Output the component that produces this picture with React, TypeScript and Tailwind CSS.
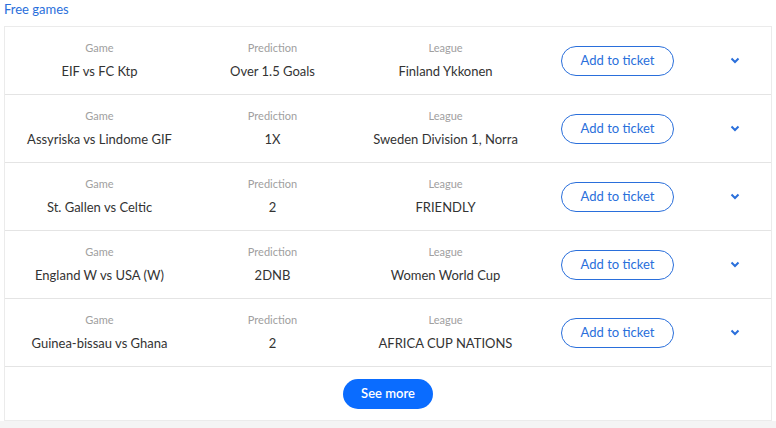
const games = [
  { game: 'EIF vs FC Ktp', prediction: 'Over 1.5 Goals', league: 'Finland Ykkonen' },
  { game: 'Assyriska vs Lindome GIF', prediction: '1X', league: 'Sweden Division 1, Norra' },
  { game: 'St. Gallen vs Celtic', prediction: '2', league: 'FRIENDLY' },
  { game: 'England W vs USA (W)', prediction: '2DNB', league: 'Women World Cup' },
  { game: 'Guinea-bissau vs Ghana', prediction: '2', league: 'AFRICA CUP NATIONS' },
]

function Cell({ label, value }: { label: string; value: string }) {
  return (
    <div className="flex w-[173px] flex-col items-center pb-[2px]">
      <span className="text-[11px] leading-[14px] text-[#a0a0a0]">{label}</span>
      <span className="mt-[8px] text-[13px] leading-[16px] text-[#333]">{value}</span>
    </div>
  )
}

export default function App() {
  return (
    <div className="h-[428px] w-[776px] bg-[#f4f4f4] font-['Lato','Open_Sans',sans-serif]">
      <div className="bg-white px-1 pt-[1px]">
        <a className="block text-[13px] leading-[17px] text-[#2a6fdb]">Free games</a>
        <div className="mt-2 border border-[#ebebeb] bg-white">
          {games.map((g) => (
            <div key={g.game} className="flex h-[68px] items-center border-b border-[#e4e4e4] pl-[8px]">
              <Cell label="Game" value={g.game} />
              <Cell label="Prediction" value={g.prediction} />
              <Cell label="League" value={g.league} />
              <button className="ml-[29px] h-[30px] w-[113px] rounded-full border border-[#2a6fdb] text-[13px] text-[#2a6fdb]">
                Add to ticket
              </button>
              <svg className="ml-[56px]" width="10" height="7" viewBox="0 0 10 7">
                <path d="M1.5 1.5 L5 5 L8.5 1.5" fill="none" stroke="#2a6fdb" strokeWidth="2" />
              </svg>
            </div>
          ))}
          <div className="flex justify-center pt-[12px] pb-[11px]">
            <button className="h-[30px] w-[90px] rounded-full bg-[#0a6cff] text-[13px] font-semibold text-white">
              See more
            </button>
          </div>
        </div>
      </div>
    </div>
  )
}
